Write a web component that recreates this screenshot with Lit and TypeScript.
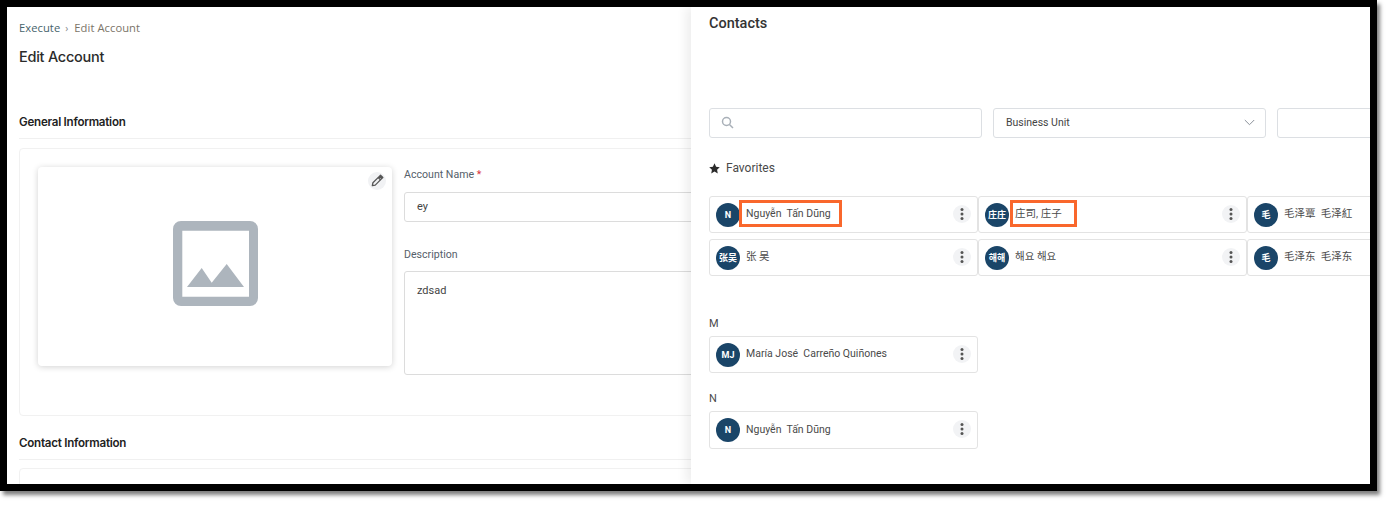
import { LitElement, html, css, svg } from "lit";
import { customElement } from "lit/decorators.js";

interface Person { init: string; name: string; hl?: [number, number] }

const favs: Person[] = [
  { init: "N", name: "Nguyễn  Tấn Dũng", hl: [29, 103] },
  { init: "庄庄", name: "庄司, 庄子", hl: [31, 67] },
  { init: "毛", name: "毛泽覃  毛泽紅" },
  { init: "张吴", name: "张 吴" },
  { init: "해해", name: "해요 해요" },
  { init: "毛", name: "毛泽东  毛泽东" },
];

const dots = svg`<svg width="18" height="18" viewBox="0 0 18 18"><circle cx="9" cy="4.6" r="1.5"/><circle cx="9" cy="9" r="1.5"/><circle cx="9" cy="13.4" r="1.5"/></svg>`;

@customElement("app-root")
export class AppRoot extends LitElement {
  static styles = css`
    :host { display: block; width: 1392px; height: 506px; background: #fff; overflow: hidden; font-family: Roboto, "Noto Sans CJK SC", sans-serif; color: #3d3d3d; }
    .frame { box-sizing: border-box; width: 1377px; height: 491px; border: 7px solid #000; display: flex; background: #fff; box-shadow: 3px 4px 4px rgba(0,0,0,.5); overflow: hidden; }
    .main { width: 684px; flex: none; padding-left: 12px; box-sizing: border-box; overflow: hidden; }
    .crumb { margin-top: 14px; height: 14px; font: 400 11.2px/14px "Open Sans", sans-serif; color: #7b7468; white-space: pre; letter-spacing: .06px; }
    .crumb b { font-weight: 400; color: #47636b; }
    .crumb i { font-style: normal; color: #888; padding: 0 6px 0 5px; font-size: 10px; }
    h1 { margin: 12px 0 0; font: 500 14.5px/20px Inter, sans-serif; color: #2b2b2b; letter-spacing: -0.25px; }
    h2 { margin: 0; font: 600 11.6px/16px Inter, sans-serif; color: #222; letter-spacing: -0.25px; white-space: nowrap; }
    .h-general { margin-top: 47px; }
    .h-contact { margin-top: 19px; }
    .rule { height: 1px; background: #f0f0f0; margin-top: 8px; width: 900px; }
    .card { margin-top: 9px; box-sizing: border-box; width: 900px; height: 268px; border: 1px solid #f1f1f1; border-radius: 4px; padding: 18px; display: flex; gap: 12px; }
    .card.open { height: 40px; margin-top: 8px; }
    .image { flex: none; box-sizing: border-box; width: 354px; height: 199px; padding: 0 0 6px 0; border-radius: 4px; background: #fff; box-shadow: 0 1px 6px rgba(0,0,0,.18); display: flex; align-items: center; justify-content: center; position: relative; }
    .edit { position: absolute; top: 5px; right: 6px; width: 18px; height: 18px; border-radius: 50%; background: #f1f2f4; display: flex; align-items: center; justify-content: center; }
    .form { width: 480px; flex: none; padding-top: 1px; }
    label { display: block; font-size: 10.6px; line-height: 14px; color: #55606a; }
    label span { color: #d9363e; }
    .input { margin-top: 10px; box-sizing: border-box; height: 30px; border: 1px solid #dcdcdc; border-radius: 3px; padding: 0 12px; font-size: 11px; line-height: 28px; color: #444; }
    .label2 { margin-top: 26px; }
    .area { margin-top: 9px; height: 104px; line-height: 14px; padding-top: 12px; }
    .drawer { flex: 1; min-width: 0; position: relative; z-index: 1; background: #fff; box-shadow: -5px 0 10px rgba(0,0,0,.07); padding: 7px 0 0 18px; box-sizing: border-box; overflow: hidden; }
    .title { font: 500 14.5px/20px Roboto, sans-serif; color: #333; }
    .filters { margin-top: 74px; display: flex; gap: 11px; width: 900px; }
    .filter { flex: none; box-sizing: border-box; width: 273px; height: 30px; border: 1px solid #dcdfe3; border-radius: 3px; display: flex; align-items: center; justify-content: space-between; padding: 0 10px 1px 12px; font-size: 10.5px; color: #444; }
    .search-icon { margin-left: -1px; }
    .fav { margin-top: 22px; display: flex; align-items: center; gap: 6px; font-size: 12px; line-height: 16px; color: #4a4a4a; }
    .grid { margin-top: 20px; display: grid; grid-template-columns: repeat(3, 269px); row-gap: 6px; }
    .person { box-sizing: border-box; width: 269px; height: 37px; border: 1px solid #e3e3e3; border-radius: 3px; display: flex; align-items: center; padding: 0 5px 0 6px; position: relative; background: #fff; }
    .person.tall { height: 38px; }
    .avatar { flex: none; width: 24px; height: 24px; border-radius: 50%; background: #1a4568; color: #fff; font-size: 9px; font-weight: 700; display: flex; align-items: center; justify-content: center; white-space: nowrap; overflow: hidden; }
    .name { margin: -2px 0 0 6px; font-size: 10.5px; line-height: 14px; color: #4a4a4a; white-space: pre; flex: 1; }
    .tall .name { margin-top: 0; }
    .more { flex: none; width: 18px; height: 18px; border-radius: 50%; background: #f2f3f5; fill: #555; margin-right: 1px; margin-top: -2px; }
    .more svg { display: block; }
    .hl { position: absolute; top: 3px; height: 27px; box-sizing: border-box; border: 3px solid #f9672c; }
    .letter { font-size: 11px; line-height: 14px; color: #4a4a4a; }
    .l-m { margin-top: 41px; }
    .l-n { margin-top: 19px; }
    .letter + .person { margin-top: 5px; }
  `;

  private person(p: Person, tall = false) {
    return html`<div class="person ${tall ? "tall" : ""}">
      <div class="avatar">${p.init}</div>
      <div class="name">${p.name}</div>
      <div class="more">${dots}</div>
      ${p.hl ? html`<div class="hl" style="left:${p.hl[0]}px;width:${p.hl[1]}px"></div>` : ""}
    </div>`;
  }

  render() {
    return html`<div class="frame">
      <div class="main">
        <div class="crumb"><b>Execute</b><i>›</i>Edit Account</div>
        <h1>Edit Account</h1>
        <h2 class="h-general">General Information</h2>
        <div class="rule"></div>
        <div class="card">
          <div class="image">
            <div class="edit">
              <svg width="14" height="14" viewBox="0 0 24 24" fill="none" stroke="#555" stroke-width="2.2" stroke-linejoin="round"><path d="M4 20l1-5L16 4l4 4L9 19z"/><path d="M14 6l4 4" /><path fill="#555" d="M17 3l1-1 4 4-1 1z"/></svg>
            </div>
            <svg width="85" height="85" viewBox="0 0 85 85"><path fill="#adb5bd" fill-rule="evenodd" d="M8 0h69a8 8 0 0 1 8 8v69a8 8 0 0 1-8 8H8a8 8 0 0 1-8-8V8a8 8 0 0 1 8-8zM9.300 9.700v66h66.700v-66z"/><path fill="#adb5bd" d="M14 66 L28.700 47 L38.700 61.700 L53.700 43 L71 66z"/></svg>
          </div>
          <div class="form">
            <label>Account Name <span>*</span></label>
            <div class="input">ey</div>
            <label class="label2">Description</label>
            <div class="input area">zdsad</div>
          </div>
        </div>
        <h2 class="h-contact">Contact Information</h2>
        <div class="rule"></div>
        <div class="card open"></div>
      </div>
      <div class="drawer">
        <div class="title">Contacts</div>
        <div class="filters">
          <div class="filter"><svg class="search-icon" width="13" height="13" viewBox="0 0 13 13" fill="none" stroke="#a9b0b8" stroke-width="1.5"><circle cx="5.500" cy="5.500" r="4"/><path d="M8.500 8.500l3.500 3.500"/></svg></div>
          <div class="filter">Business Unit<svg width="11" height="7" viewBox="0 0 11 7" fill="none" stroke="#8a9099" stroke-width="1"><path d="M.8 1l4.700 4.700L10.200 1"/></svg></div>
          <div class="filter"></div>
        </div>
        <div class="fav"><svg width="11" height="11" viewBox="0 0 24 24" fill="#2b2b2b"><path d="M12 .8l3.500 7.400 8 1-5.900 5.500 1.500 8L12 18.800l-7.100 3.900 1.500-8L.5 9.200l8-1z"/></svg>Favorites</div>
        <div class="grid">${favs.map((p) => this.person(p))}</div>
        <div class="letter l-m">M</div>
        ${this.person({ init: "MJ", name: "María José  Carreño Quiñones" })}
        <div class="letter l-n">N</div>
        ${this.person({ init: "N", name: "Nguyễn  Tấn Dũng" }, true)}
      </div>
    </div>`;
  }
}
